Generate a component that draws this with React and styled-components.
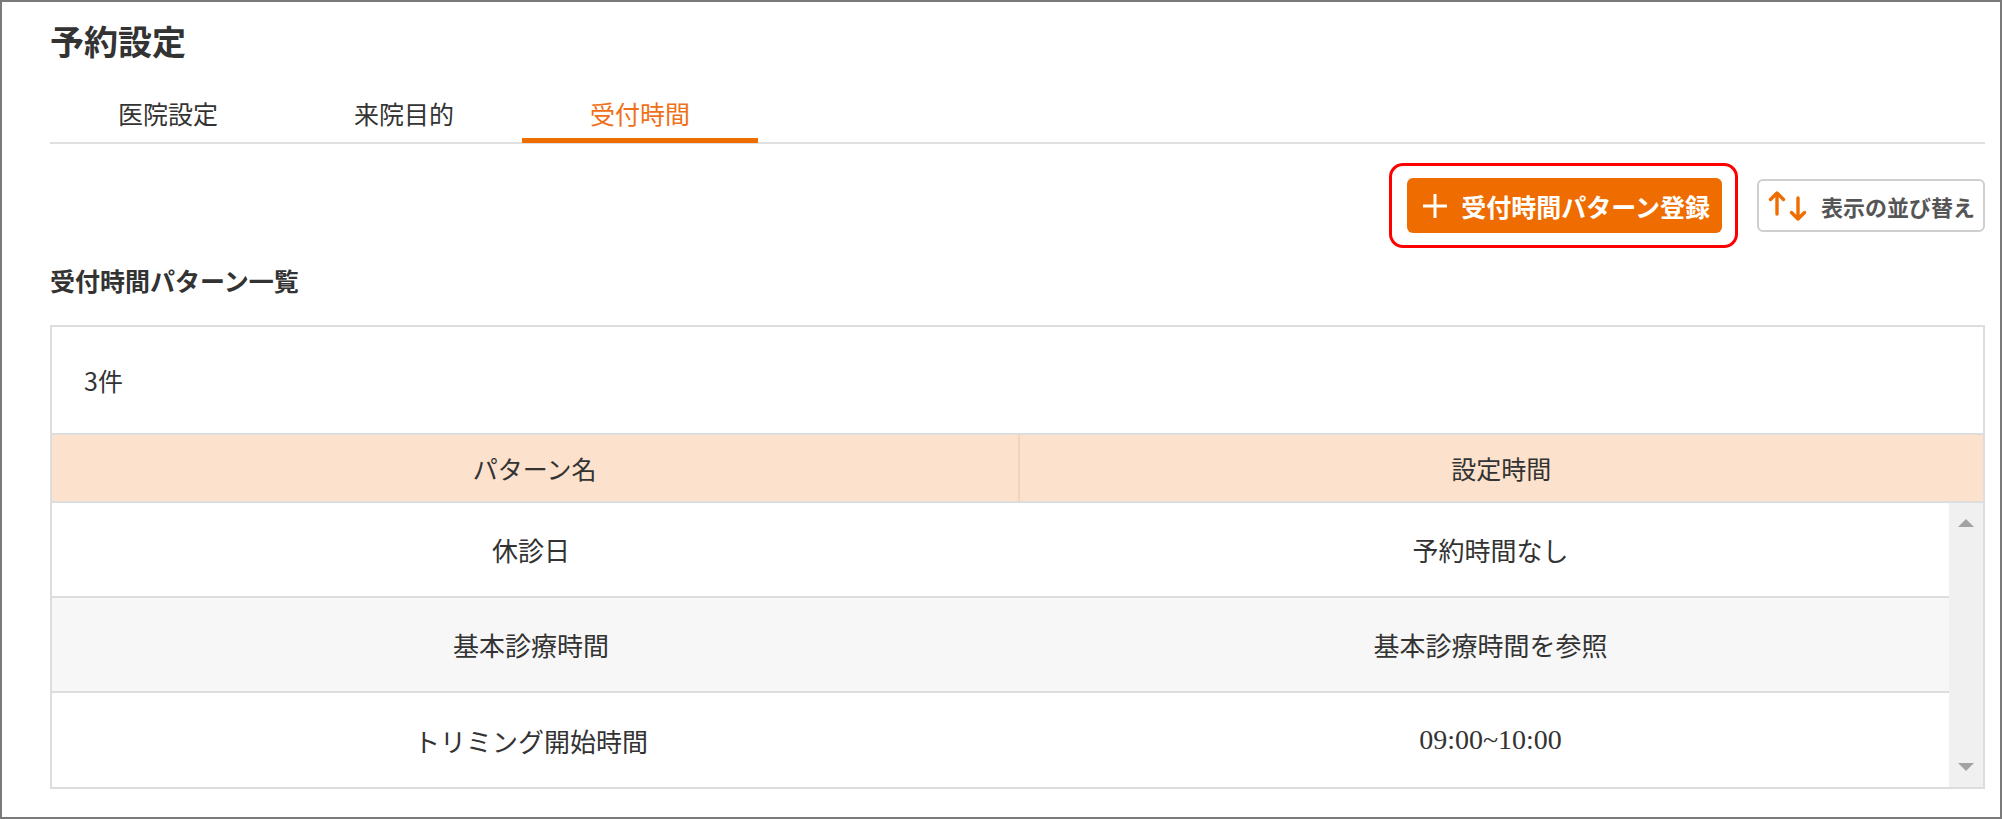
import React from 'react';
import styled, { createGlobalStyle } from 'styled-components';

const GlobalStyle = createGlobalStyle`
  html, body {
    margin: 0;
    padding: 0;
    background: #ffffff;
  }
  body {
    font-family: "Noto Sans CJK JP", "Noto Sans", sans-serif;
    color: #333;
  }
`;

const Frame = styled.div`
  width: 2002px;
  height: 819px;
  box-sizing: border-box;
  border: 2px solid #7a7a7a;
  padding: 19px 15px 0 48px;
  background: #fff;
  overflow: hidden;
`;

const PageTitle = styled.h1`
  margin: 0;
  font-size: 34px;
  line-height: 40px;
  font-weight: 700;
  color: #333;
`;

const TabBar = styled.div`
  display: flex;
  margin-top: 27px;
  border-bottom: 2px solid #e0e0e0;
`;

const Tab = styled.div`
  width: 236px;
  height: 55px;
  box-sizing: border-box;
  margin-bottom: -1px;
  line-height: 50px;
  text-align: center;
  font-size: 25px;
  color: ${p => (p.$active ? '#f07018' : '#333')};
  border-bottom: 5px solid ${p => (p.$active ? '#ef6c00' : 'transparent')};
`;

const Toolbar = styled.div`
  display: flex;
  justify-content: flex-end;
  align-items: center;
  gap: 19px;
  margin-top: 19px;
`;

const Highlight = styled.div`
  border: 3px solid #ff0000;
  border-radius: 14px;
  padding: 12px 13px 12px 15px;
`;

const PrimaryButton = styled.button`
  display: flex;
  align-items: center;
  gap: 13px;
  height: 55px;
  padding: 0 12px 0 15px;
  border: none;
  border-radius: 6px;
  background: #ef6c00;
  color: #fff;
  font-family: "Noto Sans CJK JP", "Noto Sans", sans-serif;
  font-size: 25px;
  font-weight: 700;
`;

const SortButton = styled.button`
  display: flex;
  align-items: center;
  gap: 13px;
  height: 53px;
  box-sizing: border-box;
  padding: 0 8px 0 9px;
  border: 2px solid #cfcfcf;
  border-radius: 6px;
  background: #fff;
  color: #555;
  font-family: "Noto Sans CJK JP", "Noto Sans", sans-serif;
  font-size: 22px;
  font-weight: 700;
`;

const SectionTitle = styled.h2`
  margin: 14px 0 0;
  font-size: 25px;
  line-height: 36px;
  font-weight: 700;
  color: #333;
`;

const Table = styled.div`
  margin-top: 27px;
  border: 2px solid #dddddd;
`;

const CountRow = styled.div`
  display: flex;
  align-items: center;
  height: 106px;
  padding-left: 32px;
  border-bottom: 2px solid #dddddd;
  font-size: 25px;
`;

const HeadRow = styled.div`
  display: grid;
  grid-template-columns: 1fr 1fr;
  height: 66px;
  background: #fce1cc;
  border-bottom: 2px solid #dddddd;
`;

const HeadCell = styled.div`
  display: flex;
  align-items: center;
  justify-content: center;
  font-size: 25px;
  border-left: ${p => (p.$divider ? '2px solid #f3d3bc' : 'none')};
`;

const Body = styled.div`
  display: flex;
`;

const Rows = styled.div`
  flex: 1;
`;

const Row = styled.div`
  display: grid;
  grid-template-columns: 958px 1fr;
  height: 93px;
  background: ${p => (p.$alt ? '#f7f7f7' : '#fff')};
  border-bottom: 2px solid #dddddd;

  &:last-child {
    height: 94px;
    border-bottom: none;
  }
`;

const Cell = styled.div`
  display: flex;
  align-items: center;
  justify-content: center;
  padding-left: ${p => (p.$right ? '22px' : '0')};
  font-family: ${p =>
    p.$serif ? '"Liberation Serif", serif' : '"Noto Sans CJK JP", "Noto Sans", sans-serif'};
  font-size: ${p => (p.$serif ? '28px' : '26px')};
`;

const Scrollbar = styled.div`
  width: 34px;
  background: #f0f0f0;
  display: flex;
  flex-direction: column;
  justify-content: space-between;
  align-items: center;
  padding: 16px 0;
  box-sizing: border-box;
`;

const Arrow = styled.div`
  width: 0;
  height: 0;
  border-left: 8px solid transparent;
  border-right: 8px solid transparent;
  ${p =>
    p.$up ? 'border-bottom: 8px solid #a3a3a3;' : 'border-top: 8px solid #a3a3a3;'}
`;

const PlusIcon = () => (
  <svg width="26" height="26" viewBox="0 0 26 26">
    <path d="M13 1v24M1 13h24" stroke="#fff" strokeWidth="3" fill="none" />
  </svg>
);

const SortIcon = () => (
  <svg width="40" height="32" viewBox="0 0 40 32">
    <g stroke="#ef6c00" strokeWidth="3.4" fill="none" strokeLinecap="round" strokeLinejoin="round">
      <path d="M9 24V3M2.5 9.5L9 3l6.5 6.5" />
      <path d="M30 8v21M23.5 22.5L30 29l6.5-6.5" />
    </g>
  </svg>
);

const tabs = ['医院設定', '来院目的', '受付時間'];

const patterns = [
  { name: '休診日', time: '予約時間なし' },
  { name: '基本診療時間', time: '基本診療時間を参照' },
  { name: 'トリミング開始時間', time: '09:00~10:00', serif: true },
];

const App = () => {
  return (
    <>
      <GlobalStyle />
      <Frame>
        <PageTitle>予約設定</PageTitle>
        <TabBar>
          {tabs.map((t, i) => (
            <Tab key={t} $active={i === 2}>
              {t}
            </Tab>
          ))}
        </TabBar>
        <Toolbar>
          <Highlight>
            <PrimaryButton>
              <PlusIcon />
              受付時間パターン登録
            </PrimaryButton>
          </Highlight>
          <SortButton>
            <SortIcon />
            表示の並び替え
          </SortButton>
        </Toolbar>
        <SectionTitle>受付時間パターン一覧</SectionTitle>
        <Table>
          <CountRow>3件</CountRow>
          <HeadRow>
            <HeadCell>パターン名</HeadCell>
            <HeadCell $divider>設定時間</HeadCell>
          </HeadRow>
          <Body>
            <Rows>
              {patterns.map((p, i) => (
                <Row key={p.name} $alt={i === 1}>
                  <Cell>{p.name}</Cell>
                  <Cell $right $serif={p.serif}>
                    {p.time}
                  </Cell>
                </Row>
              ))}
            </Rows>
            <Scrollbar>
              <Arrow $up />
              <Arrow />
            </Scrollbar>
          </Body>
        </Table>
      </Frame>
    </>
  );
};

export default App;
